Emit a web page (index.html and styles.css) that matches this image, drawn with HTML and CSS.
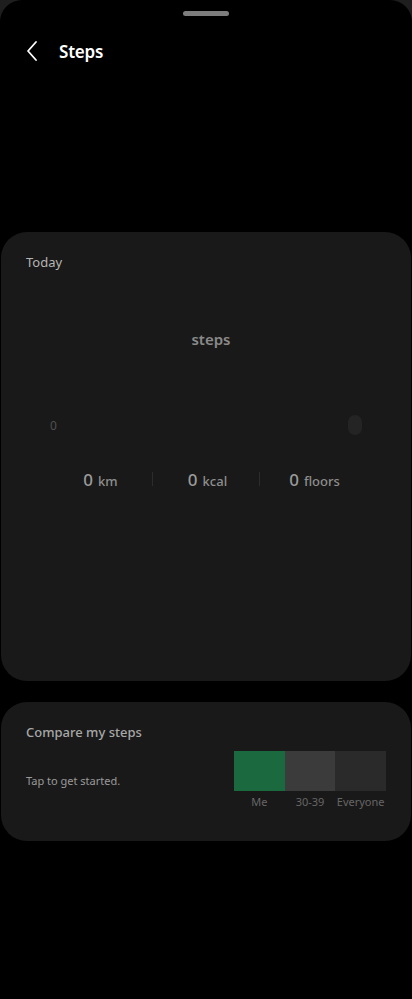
FILE: index.html
```html
<!DOCTYPE html>
<html>
<head>
<meta charset="utf-8">
<link rel="stylesheet" href="styles.css">
</head>
<body>
<div class="sheet">
  <div class="handle-wrap"><div class="handle"></div></div>
  <div class="appbar">
    <svg class="back" width="14" height="22" viewBox="0 0 14 22"><path d="M11 2 L3 11 L11 20" fill="none" stroke="#fff" stroke-width="1.8" stroke-linecap="round" stroke-linejoin="round"/></svg>
    <div class="title">Steps</div>
  </div>
  <div class="card today">
    <div class="label">Today</div>
    <div class="steps">steps</div>
    <div class="progress">
      <span class="zero">0</span>
      <span class="knob"></span>
    </div>
    <div class="stats">
      <div class="stat"><span class="num">0</span><span class="unit">km</span></div>
      <div class="divider"></div>
      <div class="stat"><span class="num">0</span><span class="unit">kcal</span></div>
      <div class="divider"></div>
      <div class="stat"><span class="num">0</span><span class="unit">floors</span></div>
    </div>
  </div>
  <div class="card compare">
    <div class="label strong">Compare my steps</div>
    <div class="compare-row">
      <div class="tap">Tap to get started.</div>
      <div class="chart">
        <div class="bars">
          <div class="bar me"></div>
          <div class="bar age"></div>
          <div class="bar all"></div>
        </div>
        <div class="bar-labels">
          <span>Me</span><span>30-39</span><span>Everyone</span>
        </div>
      </div>
    </div>
  </div>
</div>
</body>
</html>
```
FILE: styles.css
```css
html, body {
  margin: 0;
  padding: 0;
  background: #1e1e1e;
  font-family: "Noto Sans", Roboto, sans-serif;
}
.sheet {
  background: #000;
  min-height: 999px;
  border-radius: 22px 22px 0 0;
  overflow: hidden;
}
.handle-wrap {
  display: flex;
  justify-content: center;
  padding-top: 11px;
}
.handle {
  width: 46px;
  height: 5px;
  border-radius: 3px;
  background: #7d7d7d;
}
.appbar {
  display: flex;
  align-items: center;
  height: 26px;
  margin-top: 22px;
  padding-left: 25px;
}
.back {
  display: block;
}
.title {
  margin-left: 20px;
  color: #fff;
  font-size: 17px;
  font-weight: 600;
  letter-spacing: -0.2px;
}
.card {
  background: #191919;
  border-radius: 26px;
  margin: 0 1px;
}
.today {
  margin-top: 168px;
  height: 449px;
  padding: 0 25px;
  box-sizing: border-box;
  display: flex;
  flex-direction: column;
}
.label {
  color: #b5b5b5;
  font-size: 13px;
  padding-top: 21px;
  line-height: 18px;
}
.label.strong {
  color: #a8a8a8;
  font-weight: 500;
}
.steps {
  text-align: center;
  color: #8a8a8a;
  font-size: 15px;
  font-weight: 600;
  margin-top: 57px;
  line-height: 22px;
  padding-left: 10px;
}
.progress {
  display: flex;
  justify-content: space-between;
  align-items: center;
  margin-top: 65px;
  padding: 0 24px 0 24px;
  height: 20px;
}
.zero {
  color: #505050;
  font-size: 12px;
}
.knob {
  width: 14px;
  height: 20px;
  border-radius: 7px;
  background: #242424;
}
.stats {
  display: flex;
  align-items: center;
  justify-content: center;
  margin-top: 32px;
  height: 24px;
}
.stat {
  width: 106px;
  display: flex;
  justify-content: center;
  align-items: baseline;
  gap: 5px;
  padding-left: 3px;
  box-sizing: border-box;
}
.num {
  color: #9a9a9a;
  font-size: 17px;
  font-weight: 500;
}
.unit {
  color: #8e8e8e;
  font-size: 13px;
  font-weight: 500;
}
.divider {
  width: 1px;
  height: 14px;
  background: #2c2c2c;
}
.compare {
  margin-top: 21px;
  height: 139px;
  padding: 0 25px;
  box-sizing: border-box;
}
.compare .label {
  padding-top: 21px;
}
.compare-row {
  display: flex;
  justify-content: space-between;
  margin-top: 10px;
}
.tap {
  color: #999;
  font-size: 11px;
  margin-top: 22px;
}
.chart {
  width: 152px;
}
.bars {
  display: flex;
  height: 40px;
}
.bar {
  flex: 1;
}
.bar.me { background: #1b6a3f; }
.bar.age { background: #3b3b3b; }
.bar.all { background: #2a2a2a; }
.bar-labels {
  display: flex;
  margin-top: 3px;
}
.bar-labels span {
  flex: 1;
  text-align: center;
  color: #666;
  font-size: 11px;
  line-height: 16px;
}
```
